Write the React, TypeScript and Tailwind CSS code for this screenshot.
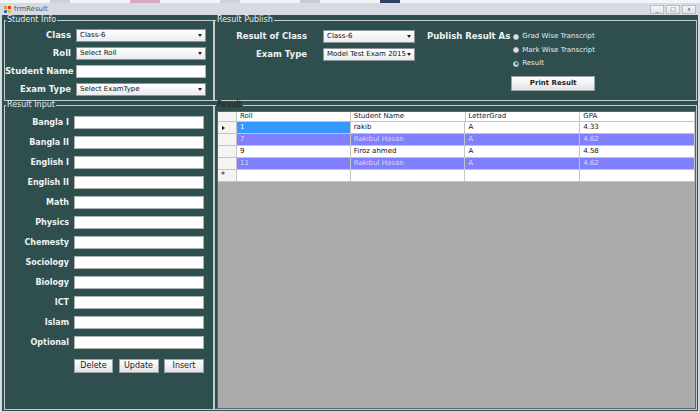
import React from 'react';

const subjects = ['Bangla I', 'Bangla II', 'English I', 'English II', 'Math', 'Physics', 'Chemesty', 'Sociology', 'Biology', 'ICT', 'Islam', 'Optional'];

const rows = [
	{ roll: '1', name: 'rakib', grade: 'A', gpa: '4.33', alt: false, current: true },
	{ roll: '7', name: 'Rakibul Hasan', grade: 'A', gpa: '4.62', alt: true },
	{ roll: '9', name: 'Firoz ahmed', grade: 'A', gpa: '4.58', alt: false },
	{ roll: '11', name: 'Rakibul Hasan', grade: 'A', gpa: '4.62', alt: true },
];

const Combo = ({ value, className = '' }: { value?: string; className?: string }) => (
	<div className={`h-[13px] flex items-center justify-between border border-[#8d9499] bg-gradient-to-b from-white to-[#e9ebee] pl-[3px] pr-[3px] font-normal ${className}`}>
		<span className="text-[7px] leading-none text-[#111] whitespace-nowrap">{value}</span>
		<span className="w-0 h-0 border-l-[2px] border-r-[2px] border-t-[3px] border-l-transparent border-r-transparent border-t-[#222]" />
	</div>
);

const TextBox = () => <div className="h-[13px] w-[130px] bg-white border border-[#a9b3b3]" />;

const Group = ({ title, className = '', dark = false, children }: { title: string; className?: string; dark?: boolean; children: React.ReactNode }) => (
	<fieldset className={`border border-[#c3cccc] min-w-0 ${className}`}>
		<legend className={`ml-[1px] px-[1px] text-[8px] leading-[8px] ${dark ? 'text-[#1c2020]' : 'text-[#e4ebeb]'}`}>{title}</legend>
		{children}
	</fieldset>
);

const Radio = ({ label, checked = false }: { label: string; checked?: boolean }) => (
	<div className="flex items-center gap-[3px] h-[13px] pl-[2px] font-normal">
		<span className="w-[6px] h-[6px] rounded-full bg-[#e3e3e3] border border-[#b9b9b9] flex items-center justify-center">
			{checked && <span className="w-[3px] h-[3px] rounded-full bg-[#2a5da8]" />}
		</span>
		<span className="text-[7px] leading-none text-[#e6ecec]">{label}</span>
	</div>
);

const Btn = ({ label, className = '' }: { label: string; className?: string }) => (
	<div className={`flex items-center justify-center border border-[#9ea3a8] bg-gradient-to-b from-white to-[#e1e3e6] text-[#222] ${className}`}>{label}</div>
);

const cols = ['w-[114px]', 'w-[115px]', 'w-[115px]', 'w-[115px]'];

const ResultGrid = () => (
	<div className="h-[298px] w-[479px] bg-[#ababab] border border-[#606466] text-[7px] leading-none">
		<div className="flex h-[10px] bg-white">
			<div className="w-[19px] border-r border-b border-[#c4c4c4] bg-[#f4f4f4]" />
			{['Roll', 'Student Name', 'LetterGrad', 'GPA'].map((h, i) => (
				<div key={h} className={`${cols[i]} border-r border-b border-[#c4c4c4] pl-[3px] flex items-center text-[#222]`}>{h}</div>
			))}
		</div>
		{rows.map((r) => (
			<div key={r.roll} className={`flex h-[12px] ${r.alt ? 'bg-[#8080ff] text-[#d6d6ff]' : 'bg-white text-[#111]'}`}>
				<div className="w-[19px] border-r border-b border-[#c4c4c4] bg-[#f4f4f4] flex items-center pl-[4px]">
					{r.current && <span className="w-0 h-0 border-t-[2.5px] border-b-[2.5px] border-l-[3px] border-t-transparent border-b-transparent border-l-[#111]" />}
				</div>
				{[r.roll, r.name, r.grade, r.gpa].map((v, i) => (
					<div key={i} className={`${cols[i]} border-r border-b border-[#c4c4c4] pl-[3px] flex items-center ${r.current && i === 0 ? 'bg-[#3399ff] text-white' : ''}`}>{v}</div>
				))}
			</div>
		))}
		<div className="flex h-[12px] bg-white">
			<div className="w-[19px] border-r border-b border-[#c4c4c4] bg-[#f4f4f4] flex items-center pl-[3px] text-[8px] text-[#111]">*</div>
			{cols.map((c, i) => (
				<div key={i} className={`${c} border-r border-b border-[#c4c4c4]`} />
			))}
		</div>
	</div>
);

export default function App() {
	return (
		<div className="w-[700px] h-[412px] overflow-hidden bg-[#d6dbe3] flex flex-col" style={{ fontFamily: '"DejaVu Sans", Verdana, sans-serif' }}>
			<div className="h-[3px] bg-[#f2f4f7] flex gap-[60px] pl-[50px]">
				<div className="w-[20px] bg-[#cfd3da]" />
				<div className="w-[30px] bg-[#d8a8c0]" />
				<div className="w-[20px] bg-[#cfd3da]" />
				<div className="w-[20px] bg-[#c8ccd2]" />
				<div className="w-[20px] bg-[#304060]" />
			</div>
			<div className="h-[12px] flex items-center pl-[4px] pr-[4px]">
				<div className="w-[7px] h-[7px] grid grid-cols-2 gap-[1px]">
					<span className="bg-[#e0a030]" />
					<span className="bg-[#d04020]" />
					<span className="bg-[#3070c0]" />
					<span className="bg-[#e0c040]" />
				</div>
				<span className="ml-[3px] text-[7px] leading-none text-[#50555c]">frmResult</span>
				<div className="ml-auto flex gap-[2px]">
					{['_', '□', 'x'].map((c) => (
						<div key={c} className="w-[14px] h-[9px] border border-[#b8bdc4] bg-gradient-to-b from-[#f5f6f8] to-[#dfe3e8] flex items-center justify-center text-[6px] leading-none text-[#555]">{c}</div>
					))}
				</div>
			</div>
			<div className="flex-1 mx-[2px] mb-[1px] bg-[#2f4f4f] grid grid-cols-[210px_1fr] grid-rows-[85px_1fr] pl-[2px] pr-[1px] pt-[1px]">
				<Group title="Student Info">
					<div className="grid grid-cols-[66px_130px] gap-x-[5px] gap-y-[5px] pt-[5px] font-bold text-[8.5px] leading-none text-[#eef2f2] items-center">
						<span className="text-right">Class</span>
						<Combo value="Class-6" />
						<span className="text-right">Roll</span>
						<Combo value="Select Roll" />
						<span className="text-right whitespace-nowrap">Student Name</span>
						<TextBox />
						<span className="text-right whitespace-nowrap">Exam Type</span>
						<Combo value="Select ExamType" />
					</div>
				</Group>
				<Group title="Result Publish">
					<div className="flex items-start pt-[6px] text-[#eef2f2]">
						<div className="grid grid-cols-[92px_92px] gap-x-[16px] gap-y-[5px] font-bold text-[8.5px] leading-none items-center">
							<span className="text-right whitespace-nowrap">Result of Class</span>
							<Combo value="Class-6" />
							<span className="text-right whitespace-nowrap">Exam Type</span>
							<Combo value="Model Test Exam 2015" />
						</div>
						<div className="ml-[12px] h-[13px] flex items-center font-bold text-[8.5px] leading-none whitespace-nowrap">Publish Result As</div>
						<div className="ml-[1px] flex flex-col gap-[0.5px]">
							<Radio label="Grad Wise Transcript" />
							<Radio label="Mark Wise Transcript" />
							<Radio label="Result" checked />
							<Btn label="Print Result" className="mt-[5px] w-[84px] h-[15px] text-[7px] font-bold" />
						</div>
					</div>
				</Group>
				<Group title="Result Input" className="mb-[1px]">
					<div className="grid grid-cols-[64px_130px] gap-x-[5px] gap-y-[7px] pt-[7px] font-bold text-[8px] leading-none text-[#eef2f2] items-center">
						{subjects.map((s) => (
							<React.Fragment key={s}>
								<span className="text-right whitespace-nowrap">{s}</span>
								<TextBox />
							</React.Fragment>
						))}
						<span />
						<div className="flex justify-between mt-[3px] font-normal text-[8px] text-[#222]">
							<Btn label="Delete" className="w-[39px] h-[14px]" />
							<Btn label="Update" className="w-[40px] h-[14px]" />
							<Btn label="Insert" className="w-[40px] h-[14px]" />
						</div>
					</div>
				</Group>
				<Group title="Result" dark className="mb-[1px]">
					<div className="pt-[2px] pl-[2px]">
						<ResultGrid />
					</div>
				</Group>
			</div>
		</div>
	);
}
